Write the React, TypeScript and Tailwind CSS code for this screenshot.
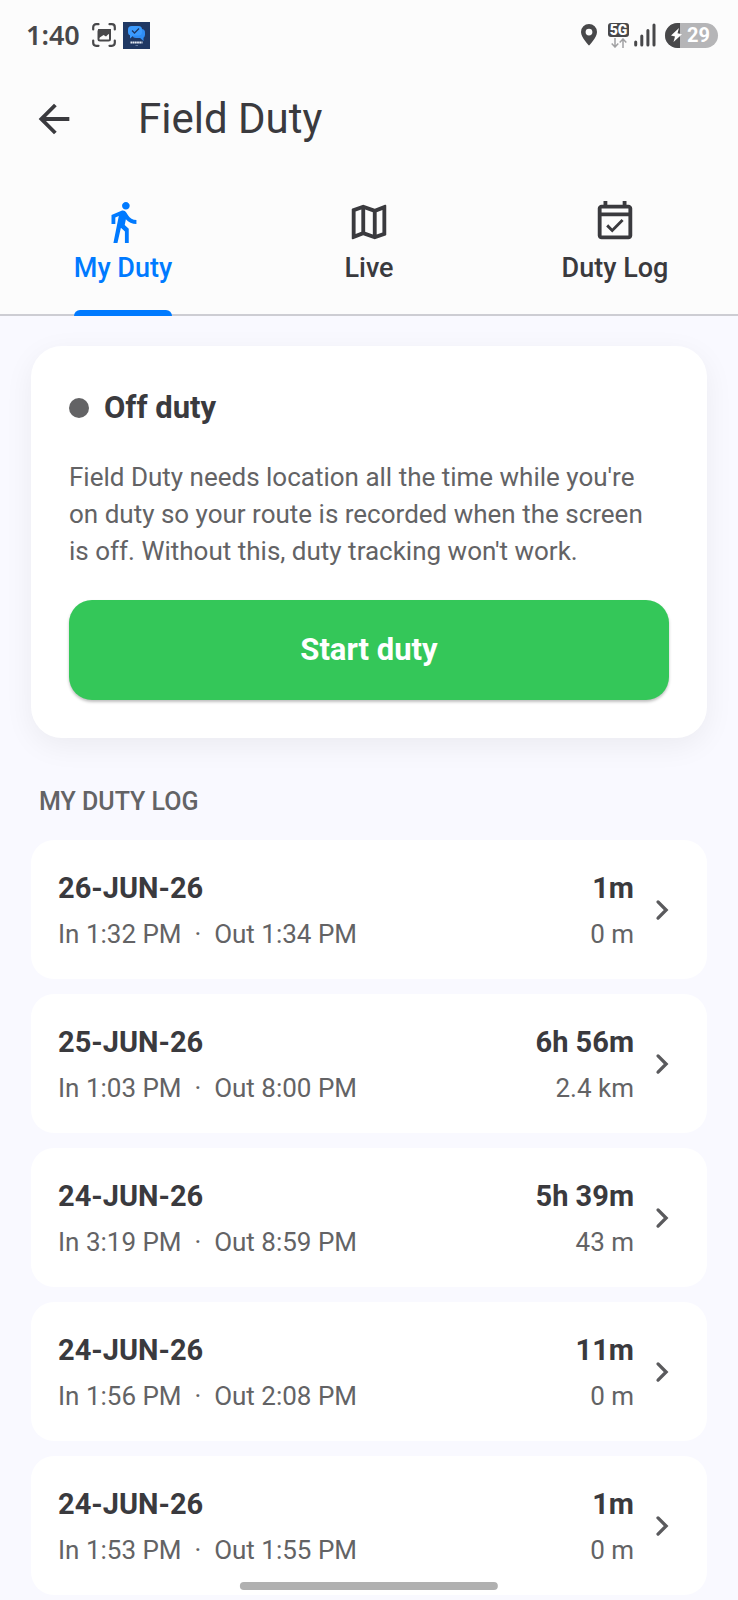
import React from 'react';
import { MdArrowBack, MdDirectionsWalk, MdOutlineEventAvailable, MdOutlineMap } from 'react-icons/md';

const tabs = [
  { name: 'My Duty', icon: MdDirectionsWalk, active: true },
  { name: 'Live', icon: MdOutlineMap, active: false },
  { name: 'Duty Log', icon: MdOutlineEventAvailable, active: false },
];

const dutyLog = [
  { date: '26-JUN-26', in: '1:32 PM', out: '1:34 PM', duration: '1m', distance: '0 m' },
  { date: '25-JUN-26', in: '1:03 PM', out: '8:00 PM', duration: '6h 56m', distance: '2.4 km' },
  { date: '24-JUN-26', in: '3:19 PM', out: '8:59 PM', duration: '5h 39m', distance: '43 m' },
  { date: '24-JUN-26', in: '1:56 PM', out: '2:08 PM', duration: '11m', distance: '0 m' },
  { date: '24-JUN-26', in: '1:53 PM', out: '1:55 PM', duration: '1m', distance: '0 m' },
];

function StatusBar() {
  return (
    <div className="flex h-[70px] items-center justify-between pl-[26px] pr-5 text-[#48484a]">
      <div className="flex items-center">
        <span className="font-['Noto_Sans',sans-serif] text-[27px] font-semibold leading-8">1:40</span>
        <svg className="ml-3 h-6 w-6" viewBox="0 0 24 24" fill="none" aria-hidden="true">
          <path
            d="M1.2 6.5V4.2a3 3 0 0 1 3-3h2.3M17.5 1.2h2.3a3 3 0 0 1 3 3v2.3M22.8 17.5v2.3a3 3 0 0 1-3 3h-2.3M6.5 22.8H4.2a3 3 0 0 1-3-3v-2.3"
            stroke="currentColor"
            strokeWidth="2.2"
            strokeLinecap="round"
          />
          <rect x="6.5" y="7" width="11.5" height="10.5" rx="1.5" stroke="currentColor" strokeWidth="2" />
          <path d="M6 6h13v7.5l-2.500-2.500-2.500 2.500-2.500-1.500L7 15z" fill="currentColor" />
        </svg>
        <svg className="ml-[7px] h-[27px] w-[27px]" viewBox="0 0 27 27" aria-hidden="true">
          <rect width="27" height="27" fill="#1f3864" />
          <rect x="9.5" y="7" width="12.5" height="9" rx="3.5" fill="#2f8df5" />
          <path d="M16 15h4.500v4z" fill="#2f8df5" />
          <rect x="5" y="4" width="14" height="9.500" rx="3.5" fill="#3b9bff" />
          <path d="M7 12.5v4l4-3.5z" fill="#3b9bff" />
          <path d="m9 8.500 2.500 2.500 4.500-4.500" fill="none" stroke="#1f3864" strokeWidth="1.3" />
          <path d="M7.500 20.5h12" stroke="#e5ebf5" strokeWidth="2" strokeDasharray="1.800 0.400" />
          <path d="M12.5 23.5h2.5" stroke="#6f86ad" strokeWidth="0.8" />
        </svg>
      </div>

      <div className="flex items-center">
        <svg className="h-[22px] w-4" viewBox="0 0 16 22" aria-hidden="true">
          <path
            fill="currentColor"
            fillRule="evenodd"
            d="M8 0a8 8 0 0 1 8 8c0 5.5-8 13.5-8 13.5S0 13.5 0 8a8 8 0 0 1 8-8zm0 4.700a3.400 3.400 0 1 0 0 6.800 3.400 3.400 0 0 0 0-6.800z"
          />
        </svg>
        <div className="ml-[11px] flex flex-col items-center gap-px">
          <span className="h-[14px] w-[21px] rounded-[3px] bg-[#48484a] text-center font-['Roboto',sans-serif] text-[14px] font-black leading-[14px] text-white">
            5G
          </span>
          <svg className="h-[10px] w-4" viewBox="0 0 16 10" fill="none" stroke="#a0a0a2" strokeWidth="1.5" aria-hidden="true">
            <path d="M4 0v9M.7 5.5 4 9l3.3-3.5M12 10V1M8.7 4.5 12 1l3.3 3.5" />
          </svg>
        </div>
        <svg className="ml-[5px] h-6 w-[22px]" viewBox="0 0 22 24" stroke="currentColor" strokeWidth="3" strokeLinecap="round" aria-hidden="true">
          <path d="M1.7 19v3M7.8 13v9M13.9 7.5V22M20 2v20" />
        </svg>
        <div className="relative ml-[9px] flex h-[25px] w-[53px] items-center overflow-hidden rounded-full bg-[#b5b5b7]">
          <div className="h-full w-[15px] bg-[#48484a]" />
          <svg className="absolute left-[6px] h-[14px] w-[11px]" viewBox="0 0 11 14" fill="#fff" aria-hidden="true">
            <path d="M8 0 0 7.500 4 8.500 2.500 14 11 6.200 6.500 5.200z" />
          </svg>
          <span className="ml-[7px] font-['Roboto',sans-serif] text-[20px] font-bold leading-[25px] text-white">29</span>
        </div>
      </div>
    </div>
  );
}

function Chevron() {
  return (
    <svg className="h-[38px] w-[38px]" viewBox="0 0 24 24" fill="none" stroke="currentColor" aria-hidden="true">
      <path d="m9.500 6.900 5.100 5.100-5.100 5.100" strokeWidth="2.100" strokeLinecap="round" />
    </svg>
  );
}

export default function App() {
  return (
    <div className="min-h-screen bg-[#f9f9ff] pb-[5px] font-['Roboto',sans-serif] text-[#3a3a3e]">
      <header className="border-b-2 border-[#cdcdd3] bg-[#fcfcfc]">
        <StatusBar />
        <div className="flex h-[98px] items-center pl-[31px]">
          <button type="button" aria-label="Back" className="p-0">
            <MdArrowBack className="h-[46px] w-[46px]" />
          </button>
          <h1 className="ml-[61px] text-[42px] leading-[56px]">Field Duty</h1>
        </div>
        <nav className="grid grid-cols-3">
          {tabs.map(({ name, icon: Icon, active }) => (
            <button
              key={name}
              type="button"
              className={`flex h-[146px] justify-center pt-[31px] ${active ? 'text-[#007aff]' : ''}`}
            >
              <span className="relative flex h-full flex-col items-center">
                <Icon className="h-[46px] w-[46px]" />
                <span className="mt-[7px] text-[27px] font-medium leading-[32px]">{name}</span>
                {active && (
                  <span className="absolute inset-x-0 -bottom-0.5 h-1.5 rounded-t-md bg-[#007aff]" />
                )}
              </span>
            </button>
          ))}
        </nav>
      </header>

      <main className="px-[31px] pt-[30px]">
        <section className="rounded-[31px] bg-white p-[38px] shadow-[0_8px_30px_rgba(0,0,0,0.06)]">
          <div className="flex items-center gap-[15px]">
            <span className="h-5 w-5 rounded-full bg-[#636365]" />
            <h2 className="text-[31px] font-bold leading-[47px]">Off duty</h2>
          </div>
          <p className="mt-7 text-[26px] leading-[37px] text-[#636365]">
            Field Duty needs location all the time while you're
            <br />
            on duty so your route is recorded when the screen
            <br />
            is off. Without this, duty tracking won't work.
          </p>
          <button
            type="button"
            className="mt-[30px] h-[100px] w-full rounded-[23px] bg-[#34c759] text-[31px] font-bold text-white shadow-[0_2px_3px_rgba(0,0,0,0.25)]"
          >
            Start duty
          </button>
        </section>

        <h2 className="ml-2 mt-[46px] text-[25px] font-medium leading-9 text-[#636365]">MY DUTY LOG</h2>

        <ul className="mt-5 flex flex-col gap-[15px]">
          {dutyLog.map((entry) => (
            <li key={`${entry.date} ${entry.in}`}>
              <button
                type="button"
                className="flex w-full items-center rounded-[23px] bg-white py-[27px] pl-[27px] pr-[26px] text-left"
              >
                <span className="flex flex-1 flex-col gap-[7px]">
                  <span className="text-[29px] font-bold leading-[42px]">{entry.date}</span>
                  <span className="whitespace-pre text-[26px] leading-9 text-[#636365]">
                    {`In ${entry.in}  ·  Out ${entry.out}`}
                  </span>
                </span>
                <span className="mr-[9px] flex flex-col gap-[7px] text-right">
                  <span className="text-[29px] font-bold leading-[42px]">{entry.duration}</span>
                  <span className="text-[26px] leading-9 text-[#636365]">{entry.distance}</span>
                </span>
                <span className="text-[#5a5a5d]">
                  <Chevron />
                </span>
              </button>
            </li>
          ))}
        </ul>
      </main>

      {/* system gesture bar */}
      <div className="fixed bottom-[10px] left-1/2 h-2 w-[35%] -translate-x-1/2 rounded-full bg-[#b0b0b0]" />
    </div>
  );
}
